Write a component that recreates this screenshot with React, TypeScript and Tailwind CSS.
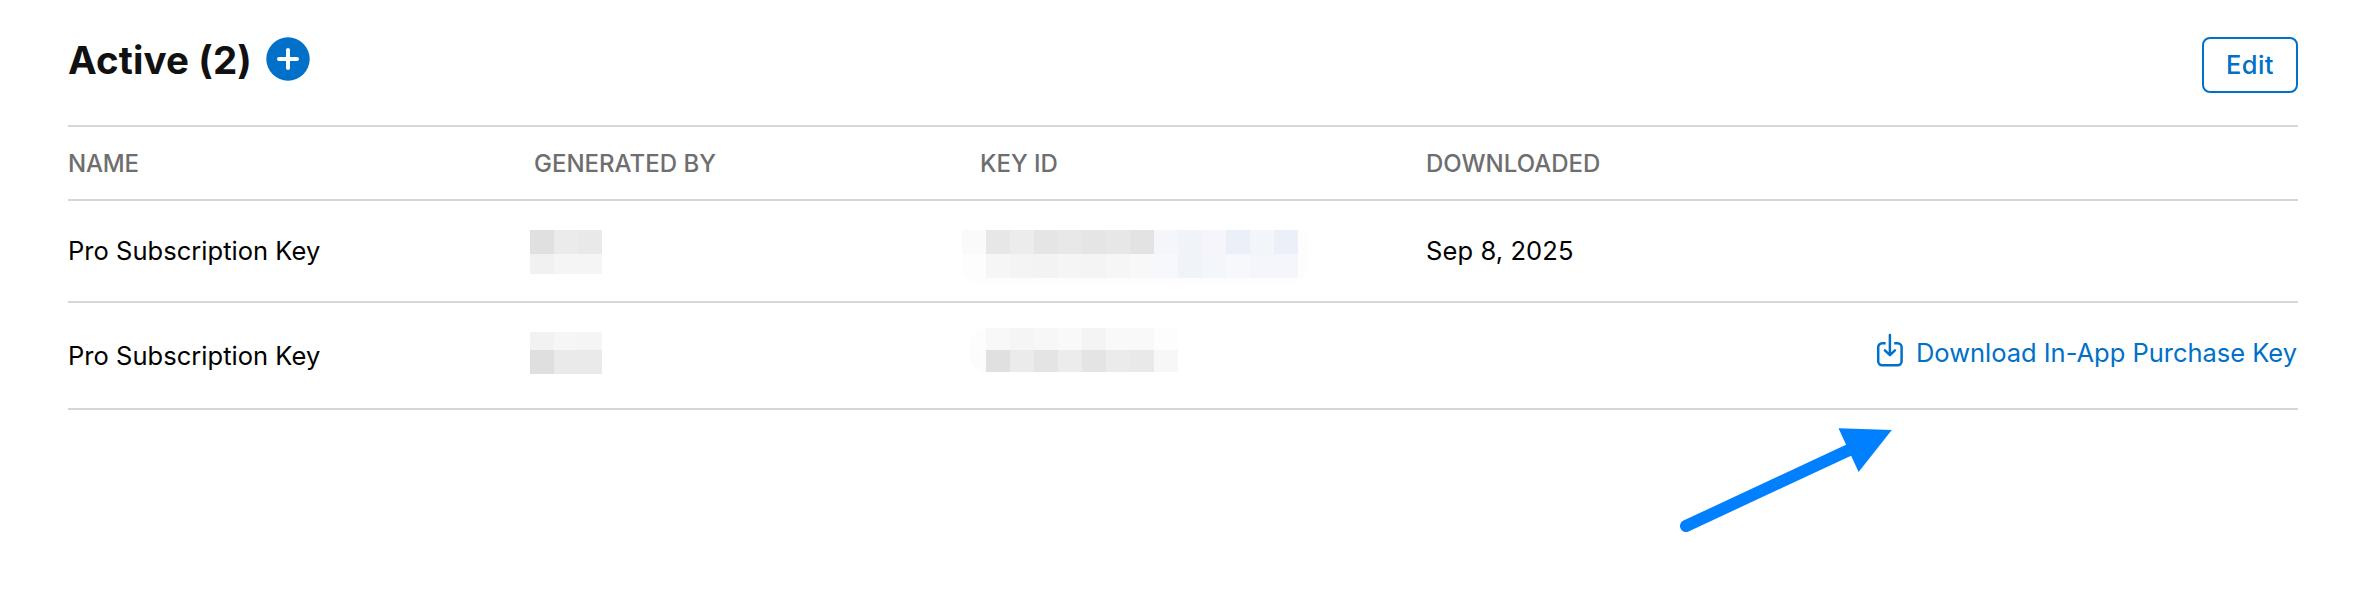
import type { ReactNode } from 'react';

const GRID = 'grid grid-cols-[466px_446px_446px_1fr] border-b-2 border-[#d6d6d6]';

function Strip({ colors, className }: { colors: string[]; className: string }) {
  return (
    <div className={`flex ${className}`}>
      {colors.map((color, i) => (
        <div key={i} className="w-6 shrink-0" style={{ backgroundColor: color }} />
      ))}
    </div>
  );
}

function Row({ height, name, generatedBy, keyId, children }: {
  height: string;
  name: string;
  generatedBy: ReactNode;
  keyId: ReactNode;
  children: ReactNode;
}) {
  return (
    <div className={`${GRID} ${height} text-[25.5px] text-black`}>
      <div className="flex items-center pt-px tracking-[0.03px]">{name}</div>
      <div>{generatedBy}</div>
      <div>{keyId}</div>
      {children}
    </div>
  );
}

function DownloadIcon() {
  return (
    <svg className="mb-[5px]" width="28" height="36" viewBox="0 0 28 36" fill="none" stroke="#0070c9" strokeWidth="2.5" strokeLinecap="round" strokeLinejoin="round">
      <path d="M9.6 10.3H6.2a4 4 0 0 0-4 4v13.9a4 4 0 0 0 4 4h15.4a4 4 0 0 0 4-4V14.3a4 4 0 0 0-4-4h-3.4" strokeLinecap="butt" />
      <path d="M13.9 1.9v20M8.9 17.4l5 4.8 5-4.8" />
    </svg>
  );
}

export default function App() {
  return (
    <div className="relative h-[610px] w-full overflow-hidden bg-white pl-[68px] pr-[78px] font-['Inter',sans-serif] whitespace-nowrap">
      <header className="flex h-[127px] items-start justify-between border-b-2 border-[#d6d6d6] pt-[37px]">
        <div className="flex h-11 items-center gap-[14px]">
          <h1 className="pt-0.5 text-[38.5px] leading-none font-bold tracking-[0.12px] text-[#111111]">Active (2)</h1>
          <button className="size-11" aria-label="Add">
            <svg width="44" height="44" viewBox="0 0 44 44">
              <circle cx="22" cy="22" r="21.7" fill="#0070c9" />
              <path d="M22 13v18M13 22h18" stroke="white" strokeWidth="4" strokeLinecap="round" />
            </svg>
          </button>
        </div>
        <button className="flex h-14 w-24 items-center justify-center rounded-lg border-2 border-[#0070c9] text-[25.5px] font-[450] tracking-[0.4px] text-[#0070c9]">Edit</button>
      </header>

      <div className={`${GRID} h-[74px] items-center pt-[2px] text-2xl font-[450] text-[#6e6e6e]`}>
        <div className="tracking-[-0.2px]">NAME</div>
        <div>GENERATED BY</div>
        <div>KEY ID</div>
        <div>DOWNLOADED</div>
      </div>

      <Row
        height="h-[102px]"
        name="Pro Subscription Key"
        generatedBy={
          <div className="-ml-1 pt-[29px]">
            <Strip className="h-6" colors={['#e0e0e0', '#ebebeb', '#e9e9e9']} />
            <Strip className="h-5" colors={['#f1f1f1', '#f5f5f5', '#f5f5f5']} />
          </div>
        }
        keyId={
          <div className="-ml-[18px] pt-[29px]">
            <div className="h-[54px] w-[346px] overflow-hidden rounded-b-[18px] bg-[#fdfdfd]">
              <Strip className="h-6" colors={['#fafafa', '#e7e7e7', '#ececec', '#e5e5e5', '#e8e8e8', '#e5e5e5', '#e7e7e7', '#e3e3e3', '#f5f6fb', '#f0f4f9', '#f5f5fb', '#eaeff8', '#f2f5fa', '#eaeff8']} />
              <Strip className="h-6" colors={['#fdfdfd', '#f6f6f6', '#f4f4f4', '#f3f3f3', '#f5f5f5', '#f4f4f4', '#f6f6f6', '#f8f8f8', '#f7f8fd', '#f0f4f9', '#f3f7fc', '#f7f8fc', '#f5f6fb', '#f5f6fb']} />
            </div>
          </div>
        }
      >
        <div className="flex items-center tracking-[0.1px]">Sep 8, 2025</div>
      </Row>

      <Row
        height="h-[107px]"
        name="Pro Subscription Key"
        generatedBy={
          <div className="-ml-1 pt-[29px]">
            <Strip className="h-[18px]" colors={['#f2f2f2', '#f6f6f6', '#f5f5f5']} />
            <Strip className="h-6" colors={['#dfdfdf', '#eaeaea', '#eaeaea']} />
          </div>
        }
        keyId={
          <div className="-ml-[10px] pt-[25px]">
            <div className="h-11 w-[208px] overflow-hidden rounded-l-[16px]">
              <div className="-ml-2">
                <Strip className="h-[22px]" colors={['#fdfdfd', '#f8f8f8', '#f5f5f5', '#f7f7f7', '#f9f9f9', '#f4f4f4', '#f9f9f9', '#f9f9f9', '#fdfdfd']} />
                <Strip className="h-[22px]" colors={['#fcfcfc', '#e0e0e0', '#ebebeb', '#e4e4e4', '#ececec', '#e4e4e4', '#ebebeb', '#e9e9e9', '#f7f7f7']} />
              </div>
            </div>
          </div>
        }
      >
        <div className="flex items-center justify-end gap-3 pr-px pb-1 tracking-[-0.02px] text-[#0070c9]">
          <DownloadIcon />
          <a>Download In-App Purchase Key</a>
        </div>
      </Row>

      <svg className="absolute top-[415px] left-[1670px]" width="240" height="130" viewBox="0 0 240 130">
        <path d="M16 111 178 35.5" stroke="#0080ff" strokeWidth="12" strokeLinecap="round" />
        <path d="M168.5 13.2 221.8 15 188.6 57Z" fill="#0080ff" />
      </svg>
    </div>
  );
}
